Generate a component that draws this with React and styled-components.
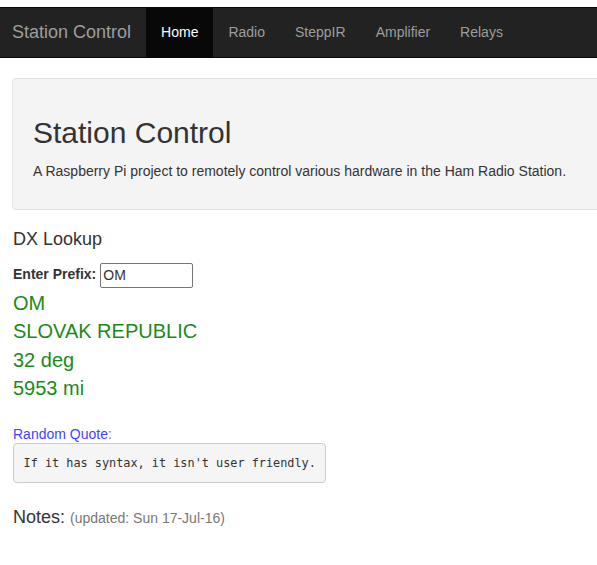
import React from "react";
import styled, { createGlobalStyle } from "styled-components";

const GlobalStyle = createGlobalStyle`
  html, body {
    margin: 0;
    padding: 0;
    overflow: hidden;
    background: #fff;
  }
  body {
    font-family: "Liberation Sans", Arial, sans-serif;
    font-size: 14px;
    line-height: 1.42857;
    color: #333;
  }
`;

const Page = styled.div`
  width: 1200px;
  padding-top: 7px;
`;

const Navbar = styled.nav`
  display: flex;
  align-items: stretch;
  height: 49px;
  background: #222;
  border-top: 1px solid #080808;
  border-bottom: 1px solid #080808;
  margin-bottom: 20px;
`;

const Brand = styled.a`
  display: flex;
  align-items: center;
  padding: 0 15px 0 12px;
  font-size: 18px;
  color: #9d9d9d;
  text-decoration: none;
`;

const NavLink = styled.a`
  display: flex;
  align-items: center;
  padding: 0 15px;
  font-size: 14px;
  text-decoration: none;
  color: ${(p) => (p.$active ? "#fff" : "#9d9d9d")};
  background: ${(p) => (p.$active ? "#080808" : "transparent")};
`;

const Container = styled.div`
  padding-left: 12px;
`;

const Jumbotron = styled.div`
  background: #f4f4f4;
  border: 1px solid #e3e3e3;
  border-radius: 4px;
  padding: 37px 20px 27px;
  margin-bottom: 20px;
`;

const Title = styled.h1`
  margin: 0 0 13px;
  font-size: 30px;
  font-weight: 400;
  line-height: 1.1;
  color: #333;
`;

const Lead = styled.p`
  margin: 0;
  font-size: 14px;
  color: #333;
`;

const Section = styled.div`
  padding-left: 1px;
`;

const Heading = styled.h4`
  margin: 0 0 13px;
  font-size: 18px;
  font-weight: 400;
  line-height: 1.1;
`;

const FormRow = styled.div`
  display: flex;
  align-items: center;
  gap: 4px;
`;

const Label = styled.label`
  font-weight: 700;
  font-size: 14px;
`;

const Input = styled.input`
  width: 93px;
  height: 25px;
  box-sizing: border-box;
  border: 1px solid #767676;
  border-radius: 2px;
  padding: 1px 2px;
  font-family: "Liberation Sans", Arial, sans-serif;
  font-size: 14px;
  color: #333;
`;

const Results = styled.div`
  margin-top: 1px;
`;

const Result = styled.div`
  font-size: 20px;
  line-height: 1.42857;
  color: #1a8a1a;
`;

const QuoteLabel = styled.div`
  margin-top: 23px;
  font-size: 14px;
  line-height: 17px;
  color: #777;
`;

const QuoteLink = styled.span`
  color: #4444ff;
`;

const Pre = styled.pre`
  display: inline-block;
  margin: 0 0 22px;
  padding: 9.5px;
  background: #f5f5f5;
  border: 1px solid #ccc;
  border-radius: 4px;
  font-family: "DejaVu Sans Mono", Consolas, monospace;
  font-size: 11.85px;
  line-height: 18.5px;
  color: #333;
`;

const Notes = styled.div`
  font-size: 18px;
  color: #333;
`;

const Small = styled.small`
  font-size: 14px;
  color: #777;
`;

export default function App() {
  const links = ["Home", "Radio", "SteppIR", "Amplifier", "Relays"];
  return (
    <>
      <GlobalStyle />
      <Page>
        <Navbar>
          <Brand href="#">Station Control</Brand>
          {links.map((l, i) => (
            <NavLink key={l} href="#" $active={i === 0}>
              {l}
            </NavLink>
          ))}
        </Navbar>
        <Container>
          <Jumbotron>
            <Title>Station Control</Title>
            <Lead>
              A Raspberry Pi project to remotely control various hardware in the Ham Radio Station.
            </Lead>
          </Jumbotron>
          <Section>
            <Heading>DX Lookup</Heading>
            <FormRow>
              <Label>Enter Prefix:</Label>
              <Input defaultValue="OM" />
            </FormRow>
            <Results>
              <Result>OM</Result>
              <Result>SLOVAK REPUBLIC</Result>
              <Result>32 deg</Result>
              <Result>5953 mi</Result>
            </Results>
            <QuoteLabel>
              <QuoteLink>Random Quote</QuoteLink>:
            </QuoteLabel>
            <Pre>If it has syntax, it isn't user friendly.</Pre>
            <Notes>
              Notes: <Small>(updated: Sun 17-Jul-16)</Small>
            </Notes>
          </Section>
        </Container>
      </Page>
    </>
  );
}
